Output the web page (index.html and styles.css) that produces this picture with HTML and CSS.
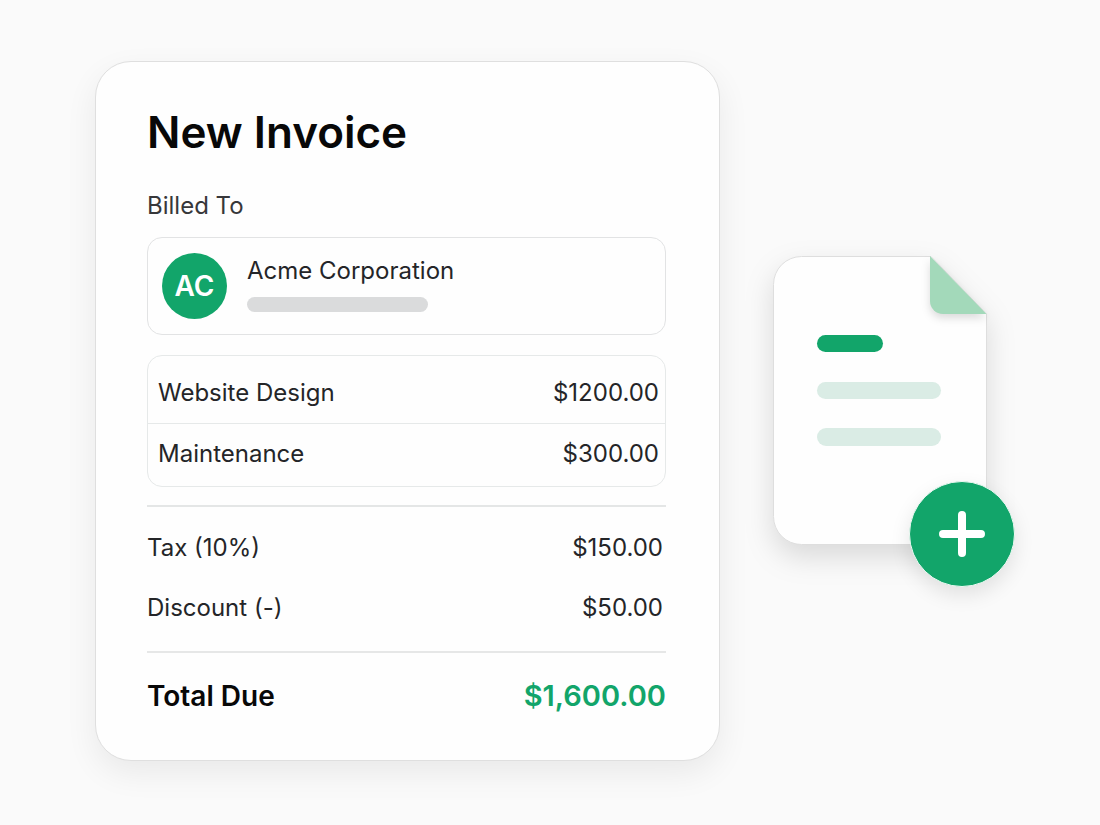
FILE: index.html
```html
<!DOCTYPE html>
<html lang="en">
<head>
    <meta charset="UTF-8">
    <meta name="viewport" content="width=device-width, initial-scale=1.0">
    <title>New Invoice</title>
    <link rel="stylesheet" href="styles.css">
</head>
<body>
    <main class="scene">
        <section class="invoice">
            <h1>New Invoice</h1>
            <h2>Billed To</h2>

            <!-- Customer -->
            <div class="customer">
                <span class="avatar">AC</span>
                <div class="customer-info">
                    <p>Acme Corporation</p>
                    <div class="placeholder"></div>
                </div>
            </div>

            <!-- Line items -->
            <div class="items">
                <table>
                    <tbody>
                        <tr>
                            <th scope="row">Website Design</th>
                            <td>$1200.00</td>
                        </tr>
                        <tr>
                            <th scope="row">Maintenance</th>
                            <td>$300.00</td>
                        </tr>
                    </tbody>
                </table>
            </div>

            <!-- Totals -->
            <dl class="adjustments">
                <div class="row">
                    <dt>Tax (10%)</dt>
                    <dd>$150.00</dd>
                </div>
                <div class="row">
                    <dt>Discount (-)</dt>
                    <dd>$50.00</dd>
                </div>
            </dl>
            <dl class="total">
                <div class="row">
                    <dt>Total Due</dt>
                    <dd>$1,600.00</dd>
                </div>
            </dl>
        </section>

        <div class="document">
            <svg class="sheet" viewBox="0 0 214 289" aria-hidden="true">
                <path class="paper" d="M28.5 .5H158L213.5 58V260.500a28 28 0 0 1-28 28H28.500a28 28 0 0 1-28-28V28.500a28 28 0 0 1 28-28z"/>
                <path class="fold" d="M157 0V45a13 13 0 0 0 13 13H213.500z"/>
                <rect class="line-strong" x="44" y="79" width="66" height="17" rx="8.500"/>
                <rect class="line" x="44" y="126" width="124" height="17" rx="8.500"/>
                <rect class="line" x="44" y="172" width="124" height="18" rx="9"/>
            </svg>
            <button class="add-btn" type="button" aria-label="Add invoice">
                <svg viewBox="0 0 46 46" aria-hidden="true">
                    <path d="M23 4V42M4 23H42"/>
                </svg>
            </button>
        </div>
    </main>
</body>
</html>
```
FILE: styles.css
```css
* {
    margin: 0;
    padding: 0;
    box-sizing: border-box;
}

body {
    font-family: Inter, 'Liberation Sans', sans-serif;
    font-size: 24px;
    line-height: 32px;
    color: #242528;
    background-color: #fafafa;
}

.scene {
    min-height: 100vh;
    padding: 58px 85px 61px 95px;
    display: flex;
    align-items: center;
    justify-content: center;
    gap: 53px;
}

.invoice {
    flex: 1;
    max-width: 720px;
    padding: 42px 53px 48px 51px;
    background-color: #fefefe;
    border: 1px solid #dfdfdf;
    border-radius: 36px;
    box-shadow: 0 12px 32px rgba(0, 0, 0, 0.07);
}

h1 {
    font-size: 44px;
    font-weight: 600;
    line-height: 56px;
    color: #080808;
    margin-bottom: 30px;
}

h2 {
    font-size: 24px;
    font-weight: 400;
    color: #37373a;
    margin-bottom: 15px;
}

.customer {
    display: flex;
    gap: 20px;
    padding: 15px 14px;
    border: 1px solid #e2e3e4;
    border-radius: 15px;
    margin-bottom: 20px;
}

.avatar {
    width: 65px;
    height: 66px;
    border-radius: 50%;
    background-color: #12a56a;
    color: #fff;
    font-size: 28px;
    font-weight: 600;
    display: flex;
    align-items: center;
    justify-content: center;
}

.customer-info {
    display: flex;
    flex-direction: column;
    gap: 10px;
    padding-top: 2px;
}

.placeholder {
    width: 181px;
    height: 15px;
    border-radius: 8px;
    background-color: #dadbdc;
}

.items {
    border: 1px solid #e6e9e9;
    border-radius: 15px;
    margin-bottom: 18px;
}

table {
    width: 100%;
    border-collapse: collapse;
}

th {
    padding: 21px 10px 14px;
    text-align: left;
    font-weight: 400;
}

td {
    padding: 21px 6px 14px;
    text-align: right;
}

tr + tr th,
tr + tr td {
    padding: 14px 6px 16px;
    border-top: 1px solid #e6e9e9;
}

tr + tr th {
    padding-left: 10px;
}

.row {
    display: flex;
    justify-content: space-between;
}

.adjustments {
    display: flex;
    flex-direction: column;
    gap: 28px;
    padding: 25px 3px 27px 0;
    border-top: 2px solid #e4e6e6;
}

.total {
    padding-top: 27px;
    border-top: 2px solid #e6e7e7;
    font-size: 28px;
    font-weight: 600;
    color: #080808;
}

.total dd {
    font-size: 29px;
    color: #12a56a;
}

.document {
    position: relative;
    flex: none;
    width: 242px;
    height: 331px;
    margin-top: 20px;
}

.sheet {
    display: block;
    width: 214px;
    height: 289px;
    overflow: visible;
    filter: drop-shadow(0 12px 14px rgba(0, 0, 0, 0.13));
}

.paper {
    fill: #fefefe;
    stroke: #dedede;
}

.fold {
    fill: #a3d9ba;
    filter: drop-shadow(0 4px 4px rgba(0, 0, 0, 0.14));
}

.line-strong {
    fill: #12a56a;
}

.line {
    fill: #daece5;
}

.add-btn {
    position: absolute;
    right: 0;
    bottom: 0;
    width: 106px;
    height: 106px;
    border: 1px solid #eefaf4;
    border-radius: 50%;
    background-color: #12a56a;
    box-shadow: 0 8px 20px rgba(0, 0, 0, 0.1);
    display: flex;
    align-items: center;
    justify-content: center;
    cursor: pointer;
}

.add-btn:hover {
    background-color: #0f945f;
}

.add-btn svg {
    width: 46px;
    height: 46px;
    fill: none;
    stroke: #fff;
    stroke-width: 8;
    stroke-linecap: round;
}

@media (max-width: 900px) {
    .scene {
        flex-direction: column;
        padding: 24px;
    }

    .invoice {
        width: 100%;
        padding: 32px 24px;
    }
}
```
